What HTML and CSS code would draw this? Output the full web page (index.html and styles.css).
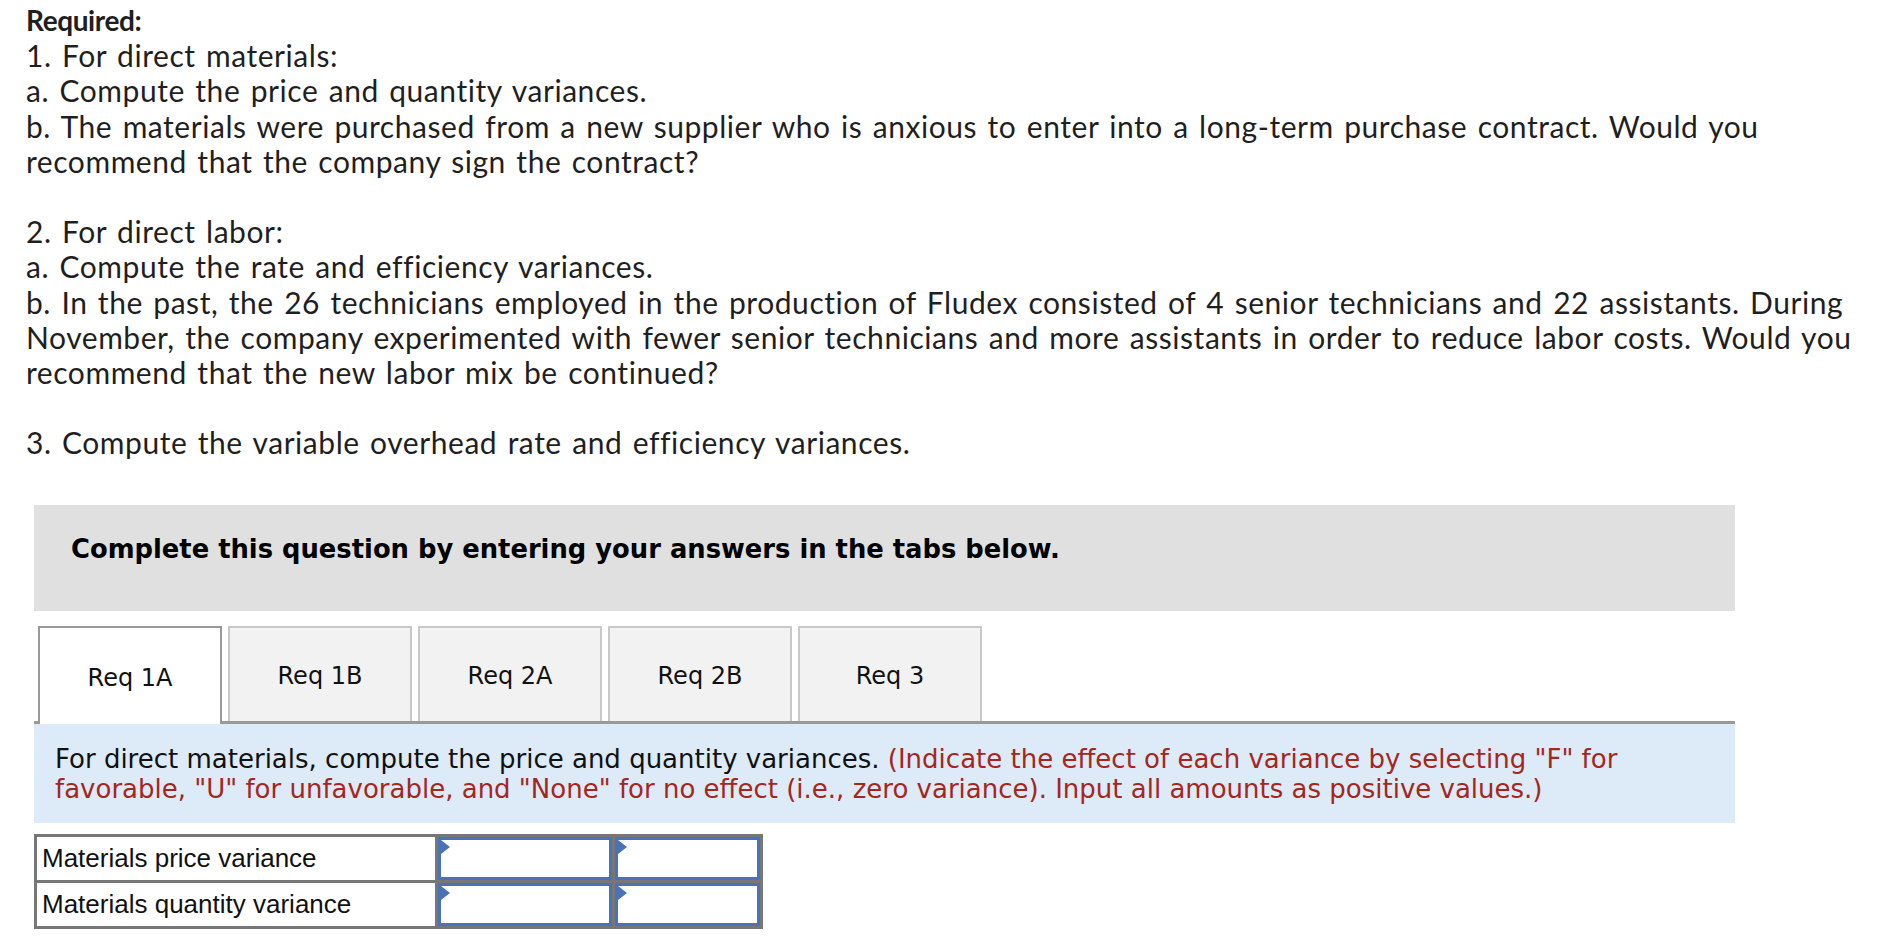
FILE: index.html
```html
<!DOCTYPE html>
<html>
<head>
<meta charset="utf-8">
<link rel="stylesheet" href="styles.css">
</head>
<body>
<div class="required">
  <div class="req-title">Required:</div>
  <div>1. For direct materials:</div>
  <div>a. Compute the price and quantity variances.</div>
  <div>b. The materials were purchased from a new supplier who is anxious to enter into a long-term purchase contract. Would you<br>recommend that the company sign the contract?</div>
  <div class="blank">&nbsp;</div>
  <div>2. For direct labor:</div>
  <div>a. Compute the rate and efficiency variances.</div>
  <div>b. In the past, the 26 technicians employed in the production of Fludex consisted of 4 senior technicians and 22 assistants. During<br>November, the company experimented with fewer senior technicians and more assistants in order to reduce labor costs. Would you<br>recommend that the new labor mix be continued?</div>
  <div class="blank">&nbsp;</div>
  <div>3. Compute the variable overhead rate and efficiency variances.</div>
</div>

<div class="complete">Complete this question by entering your answers in the tabs below.</div>

<div class="tabs">
  <div class="tab active">Req 1A</div>
  <div class="tab">Req 1B</div>
  <div class="tab">Req 2A</div>
  <div class="tab">Req 2B</div>
  <div class="tab">Req 3</div>
</div>

<div class="panel">
  For direct materials, compute the price and quantity variances. <span class="hint">(Indicate the effect of each variance by selecting "F" for<br>favorable, "U" for unfavorable, and "None" for no effect (i.e., zero variance). Input all amounts as positive values.)</span>
</div>

<table class="answers">
  <tr>
    <td class="label">Materials price variance</td>
    <td class="input wide"><div class="box"><span class="tri"></span></div></td>
    <td class="input narrow"><div class="box"><span class="tri"></span></div></td>
  </tr>
  <tr>
    <td class="label">Materials quantity variance</td>
    <td class="input wide"><div class="box"><span class="tri"></span></div></td>
    <td class="input narrow"><div class="box"><span class="tri"></span></div></td>
  </tr>
</table>
</body>
</html>
```

FILE: styles.css
```css
html, body {
  margin: 0;
  padding: 0;
  background: #ffffff;
}

body {
  width: 1888px;
  height: 940px;
  overflow: hidden;
}

.required {
  font-family: "Lato", "Open Sans", sans-serif;
  font-size: 30px;
  line-height: 35.2px;
  color: #1f1f1f;
  padding: 3px 0 0 26px;
  letter-spacing: 0.55px;
  word-spacing: 2.2px;
  white-space: nowrap;
}

.req-title {
  font-weight: 700;
  font-size: 28px;
  letter-spacing: -0.4px;
  word-spacing: 0;
}

.blank {
  height: 35.2px;
}

.complete {
  margin: 44px 0 0 34px;
  width: 1701px;
  height: 106px;
  box-sizing: border-box;
  background: #e0e0e0;
  padding: 29px 0 0 37px;
  font-family: "DejaVu Sans", Verdana, sans-serif;
  font-weight: 700;
  font-size: 25.8px;
  line-height: 31px;
  color: #000000;
}

.tabs {
  margin: 15px 0 0 34px;
  width: 1701px;
  display: flex;
  gap: 6px;
  padding-left: 4px;
  box-sizing: border-box;
  border-bottom: 3px solid #999999;
  height: 98px;
  align-items: flex-end;
}

.tab {
  width: 184px;
  height: 95px;
  box-sizing: border-box;
  background: #f2f2f2;
  border: 2px solid #c8c8c8;
  border-bottom: none;
  display: flex;
  align-items: center;
  justify-content: center;
  padding-top: 4px;
  font-family: "DejaVu Sans", Verdana, sans-serif;
  font-size: 24px;
  color: #111111;
}

.tab.active {
  background: #ffffff;
  border-color: #999999;
  height: 98px;
  margin-bottom: -3px;
  position: relative;
}

.panel {
  margin-left: 34px;
  width: 1701px;
  box-sizing: border-box;
  background: #ddeaf7;
  padding: 20px 20px 19px 21px;
  font-family: "DejaVu Sans", Verdana, sans-serif;
  font-size: 26px;
  line-height: 30px;
  color: #111111;
  white-space: nowrap;
}

.hint {
  color: #a5261d;
}

.answers {
  margin: 11px 0 0 34px;
  border-collapse: collapse;
  border: 3px solid #777777;
}

.answers td {
  border: 3px solid #777777;
  padding: 0;
  height: 43px;
}

.label {
  width: 393px;
  padding-left: 5px !important;
  font-family: "Liberation Sans", Arial, sans-serif;
  font-size: 26px;
  color: #111111;
}

.input.wide {
  width: 174px;
}

.input.narrow {
  width: 145px;
}

.box {
  position: relative;
  height: 43px;
  box-sizing: border-box;
  border: 3px solid #4a72b6;
  background: #ffffff;
}

.tri {
  position: absolute;
  left: 0;
  top: 0;
  width: 0;
  height: 0;
  border-top: 7px solid transparent;
  border-bottom: 7px solid transparent;
  border-left: 9px solid #4a72b6;
}
```
